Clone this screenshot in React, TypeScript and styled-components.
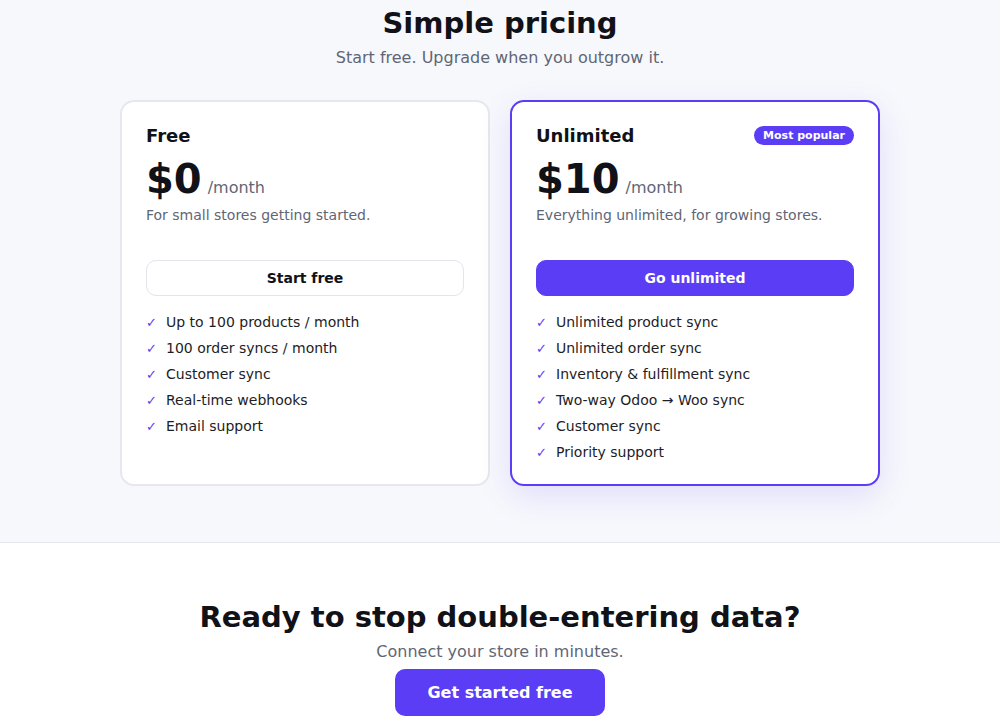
import React from "react";
import styled, { createGlobalStyle } from "styled-components";

const accent = "#5b3df5";

const GlobalStyle = createGlobalStyle`
  html, body {
    margin: 0;
    padding: 0;
    background: #ffffff;
    font-family: "DejaVu Sans", Verdana, sans-serif;
    color: #111118;
  }
  * {
    box-sizing: border-box;
  }
`;

type Plan = {
  name: string;
  price: string;
  blurb: string;
  cta: string;
  features: string[];
  featured?: boolean;
};

const plans: Plan[] = [
  {
    name: "Free",
    price: "$0",
    blurb: "For small stores getting started.",
    cta: "Start free",
    features: [
      "Up to 100 products / month",
      "100 order syncs / month",
      "Customer sync",
      "Real-time webhooks",
      "Email support",
    ],
  },
  {
    name: "Unlimited",
    price: "$10",
    blurb: "Everything unlimited, for growing stores.",
    cta: "Go unlimited",
    featured: true,
    features: [
      "Unlimited product sync",
      "Unlimited order sync",
      "Inventory & fulfillment sync",
      "Two-way Odoo → Woo sync",
      "Customer sync",
      "Priority support",
    ],
  },
];

export default function App() {
  return (
    <>
      <GlobalStyle />
      <PricingSection>
        <Heading>Simple pricing</Heading>
        <Lead>Start free. Upgrade when you outgrow it.</Lead>
        <PlanGrid>
          {plans.map((plan) => (
            <PlanCard key={plan.name} $featured={plan.featured}>
              <PlanHeader>
                <PlanName>{plan.name}</PlanName>
                {plan.featured && <Badge>Most popular</Badge>}
              </PlanHeader>
              <PriceRow>
                <Price>{plan.price}</Price>
                <Period>/month</Period>
              </PriceRow>
              <Blurb>{plan.blurb}</Blurb>
              <PlanButton $primary={plan.featured}>{plan.cta}</PlanButton>
              <FeatureList>
                {plan.features.map((f) => (
                  <Feature key={f}>
                    <Check>✓</Check>
                    {f}
                  </Feature>
                ))}
              </FeatureList>
            </PlanCard>
          ))}
        </PlanGrid>
      </PricingSection>
      <CtaSection>
        <Heading>Ready to stop double-entering data?</Heading>
        <CtaLead>Connect your store in minutes.</CtaLead>
        <CtaButton>Get started free</CtaButton>
      </CtaSection>
    </>
  );
}

const PricingSection = styled.section`
  background: #f7f8fc;
  border-bottom: 1px solid #e5e6ee;
  padding: 6px 0 56px;
  display: flex;
  flex-direction: column;
  align-items: center;
`;

const Heading = styled.h2`
  margin: 0;
  font-size: 29px;
  line-height: 1.2;
  font-weight: 700;
  color: #111118;
  text-align: center;
`;

const Lead = styled.p`
  margin: 5px 0 30px;
  font-size: 16px;
  line-height: 24px;
  color: #5f6675;
  text-align: center;
`;

const PlanGrid = styled.div`
  display: grid;
  grid-template-columns: 370px 370px;
  gap: 20px;
`;

const PlanCard = styled.div<{ $featured?: boolean }>`
  display: flex;
  flex-direction: column;
  background: #ffffff;
  border: 2px solid ${(p) => (p.$featured ? accent : "#e6e7ef")};
  border-radius: 14px;
  padding: 22px 24px 21px;
  box-shadow: ${(p) =>
    p.$featured ? "0 10px 32px rgba(91, 61, 245, 0.14)" : "none"};
`;

const PlanHeader = styled.div`
  display: flex;
  align-items: center;
  justify-content: space-between;
  height: 24px;
`;

const PlanName = styled.h3`
  margin: 0;
  font-size: 18px;
  font-weight: 700;
  color: #111118;
`;

const Badge = styled.span`
  background: ${accent};
  color: #ffffff;
  font-size: 11px;
  font-weight: 700;
  line-height: 13px;
  padding: 3px 9px;
  border-radius: 999px;
`;

const PriceRow = styled.div`
  display: flex;
  align-items: baseline;
  gap: 6px;
  margin-top: 7px;
`;

const Price = styled.span`
  font-size: 40px;
  line-height: 48px;
  font-weight: 700;
  color: #111118;
`;

const Period = styled.span`
  font-size: 16px;
  color: #5f6675;
`;

const Blurb = styled.p`
  margin: 2px 0 0;
  font-size: 14px;
  line-height: 20px;
  color: #5f6675;
`;

const PlanButton = styled.button<{ $primary?: boolean }>`
  margin-top: 35px;
  height: 36px;
  width: 100%;
  border-radius: 10px;
  font-family: inherit;
  font-size: 14px;
  font-weight: 700;
  cursor: pointer;
  border: 1px solid ${(p) => (p.$primary ? accent : "#e3e4ec")};
  background: ${(p) => (p.$primary ? accent : "#ffffff")};
  color: ${(p) => (p.$primary ? "#ffffff" : "#111118")};
`;

const FeatureList = styled.ul`
  list-style: none;
  margin: 16px 0 0;
  padding: 0;
  display: flex;
  flex-direction: column;
  gap: 5px;
`;

const Feature = styled.li`
  display: flex;
  align-items: center;
  font-size: 14px;
  line-height: 21px;
  color: #1d1d26;
`;

const Check = styled.span`
  width: 20px;
  flex-shrink: 0;
  font-size: 13px;
  color: ${accent};
`;

const CtaSection = styled.section`
  padding: 57px 0 40px;
  display: flex;
  flex-direction: column;
  align-items: center;
  background: #ffffff;
`;

const CtaLead = styled.p`
  margin: 5px 0 5px;
  font-size: 16px;
  line-height: 24px;
  color: #5f6675;
`;

const CtaButton = styled.button`
  background: ${accent};
  color: #ffffff;
  border: none;
  border-radius: 10px;
  padding: 0 32px;
  height: 47px;
  font-family: inherit;
  font-size: 16px;
  font-weight: 700;
  cursor: pointer;
`;
